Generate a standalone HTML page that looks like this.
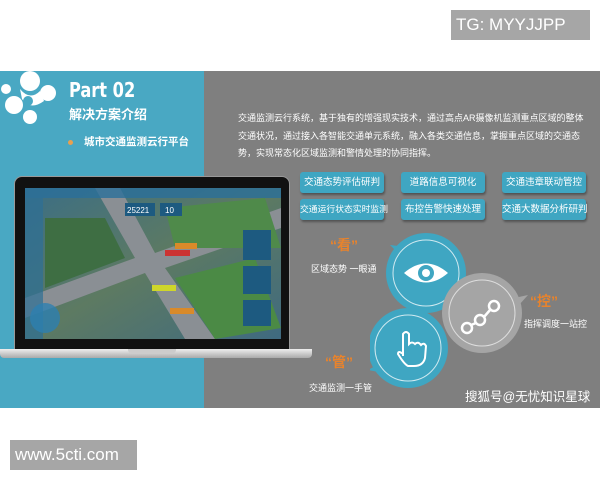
<!DOCTYPE html>
<html><head><meta charset="utf-8"><style>
body{margin:0;width:600px;height:480px;background:#fff;position:relative;overflow:hidden;font-family:"Liberation Sans","Noto Sans CJK SC",sans-serif}
.a{position:absolute}
.btn{position:absolute;width:84px;height:21px;background:#3fa6c2;border-radius:3px;color:#fff;font-size:9.5px;line-height:21px;text-align:center;box-shadow:1px 2px 2px rgba(0,0,0,.35);white-space:nowrap}
.q{position:absolute;color:#e8832c;font-weight:bold;font-size:14px}
.lbl{position:absolute;color:#fff;font-size:9px;white-space:nowrap}
</style></head><body>
<div class="a" style="left:451px;top:10px;width:139px;height:30px;background:#a6a6a6;color:#fff;font-size:17px;line-height:30px;padding-left:5px;box-sizing:border-box">TG: MYYJJPP</div>
<div class="a" style="left:10px;top:440px;width:127px;height:30px;background:#a6a6a6;color:#fff;font-size:17px;line-height:30px;padding-left:5px;box-sizing:border-box">www.5cti.com</div>
<div class="a" style="left:0;top:71px;width:600px;height:337px;background:#7f7f7f"></div>
<div class="a" style="left:0;top:71px;width:204px;height:337px;background:#49a8c3"></div>
<svg class="a" style="left:0;top:71px" width="60" height="60"><g fill="#fff"><circle cx="30" cy="10" r="10"/><circle cx="48" cy="22" r="8"/><circle cx="14" cy="34" r="9"/><circle cx="30" cy="46" r="7"/><circle cx="6" cy="18" r="5"/><path d="M20 18 Q30 30 40 20 L44 30 Q30 40 22 28Z"/></g><circle cx="28" cy="30" r="5" fill="#49a8c3"/></svg>
<div class="a" style="left:69px;top:78px;color:#fff;font-weight:bold;font-size:20px;font-family:'DejaVu Sans Condensed','Liberation Sans Narrow',sans-serif;transform:scaleX(.9);transform-origin:left">Part 02</div>
<div class="a" style="left:69px;top:104px;color:#fff;font-size:13px;font-weight:bold">解决方案介绍</div>
<div class="a" style="left:68px;top:140px;width:5px;height:5px;background:#e8a050;border-radius:50%"></div>
<div class="a" style="left:84px;top:134px;color:#fff;font-size:10.5px;font-weight:bold">城市交通监测云行平台</div>
<div class="a" style="left:238px;top:110px;color:#fff;font-size:9px;line-height:17.5px;width:352px;white-space:nowrap">交通监测云行系统，基于独有的增强现实技术，通过高点AR摄像机监测重点区域的整体<br>交通状况，通过接入各智能交通单元系统，融入各类交通信息，掌握重点区域的交通态<br>势，实现常态化区域监测和警情处理的协同指挥。</div>
<!-- laptop -->
<div class="a" style="left:14px;top:176px;width:276px;height:175px;background:#111;border-radius:8px 8px 0 0;border:1px solid #999;box-sizing:border-box"></div>
<svg class="a" style="left:25px;top:188px" width="256" height="151">
<defs><linearGradient id="g" x1="0" y1="0" x2="1" y2="1"><stop offset="0" stop-color="#3b6e85"/><stop offset=".5" stop-color="#5d7a62"/><stop offset="1" stop-color="#3f6a80"/></linearGradient></defs>
<rect width="256" height="151" fill="url(#g)"/>
<path d="M70 0 L110 70 L0 110 L0 130 L120 85 L160 151 L190 151 L140 80 L256 40 L256 20 L130 65 L95 0Z" fill="#8a8f94"/>
<path d="M140 20 L240 10 L256 60 L150 60Z" fill="#4f8a4a"/>
<path d="M150 90 L230 70 L256 140 L190 151Z" fill="#4b8a45"/>
<path d="M20 30 L80 30 L100 70 L20 100Z" fill="#3e6e43"/>
<rect x="0" y="0" width="256" height="10" fill="#2a6f9a" opacity=".8"/>
<rect x="0" y="10" width="18" height="141" fill="#2d6f96" opacity=".7"/>
<rect x="100" y="15" width="30" height="13" fill="#1d5a80"/><text x="102" y="25" fill="#fff" font-size="8" font-family="Liberation Sans">25221</text>
<rect x="135" y="15" width="22" height="13" fill="#1d5a80"/><text x="140" y="25" fill="#fff" font-size="8" font-family="Liberation Sans">10</text>
<rect x="218" y="42" width="28" height="30" fill="#1d5a80"/><rect x="218" y="78" width="28" height="28" fill="#1d5a80"/><rect x="218" y="112" width="28" height="26" fill="#1d5a80"/>
<rect x="140" y="62" width="25" height="6" fill="#c33"/><rect x="150" y="55" width="22" height="6" fill="#d98a2a"/><rect x="145" y="120" width="24" height="6" fill="#d98a2a"/><rect x="127" y="97" width="24" height="6" fill="#cfd62a"/>
<circle cx="20" cy="130" r="15" fill="#2d7fb0" opacity=".8"/>
</svg>
<div class="a" style="left:0;top:349px;width:312px;height:9px;background:linear-gradient(#eee,#aaa);border-radius:0 0 4px 4px"></div>
<div class="a" style="left:128px;top:349px;width:48px;height:4px;background:#ccc;border-radius:0 0 3px 3px"></div>
<!-- buttons -->
<div class="btn" style="left:300px;top:172px">交通态势评估研判</div>
<div class="btn" style="left:401px;top:172px">道路信息可视化</div>
<div class="btn" style="left:502px;top:172px">交通违章联动管控</div>
<div class="btn" style="left:300px;top:199px;font-size:8.8px">交通运行状态实时监测</div>
<div class="btn" style="left:401px;top:199px">布控告警快速处理</div>
<div class="btn" style="left:502px;top:199px">交通大数据分析研判</div>
<!-- circles -->
<svg class="a" style="left:370px;top:230px" width="170" height="170">
<path d="M20 15 L45 18 L40 35Z" fill="#3fa6c2"/>
<circle cx="56" cy="43" r="40" fill="#3fa6c2"/><circle cx="56" cy="43" r="33" fill="none" stroke="#cfe9f0" stroke-width="1"/>
<path d="M34 43 Q56 24 78 43 Q56 62 34 43Z" fill="#fff"/><circle cx="56" cy="43" r="8" fill="#3fa6c2"/><circle cx="56" cy="43" r="4" fill="#fff"/>
<path d="M158 65 L135 70 L140 85Z" fill="#a5a5a5"/>
<circle cx="112" cy="83" r="40" fill="#a5a5a5"/><circle cx="112" cy="83" r="33" fill="none" stroke="#ddd" stroke-width="1"/>
<g fill="none" stroke="#fff" stroke-width="2.5"><circle cx="97" cy="98" r="5"/><circle cx="110" cy="90" r="5"/><circle cx="124" cy="76" r="5"/><path d="M101 95 L106 93 M114 87 L120 80"/></g>
<path d="M-2 140 L20 128 L25 145Z" fill="#3fa6c2"/>
<circle cx="38" cy="118" r="40" fill="#3fa6c2"/><circle cx="38" cy="118" r="33" fill="none" stroke="#cfe9f0" stroke-width="1"/>
<path d="M33 126 L33 104 Q36 100 39 104 L39 114 Q42 111 45 114 Q48 111 51 115 Q54 112 56 116 L55 128 Q53 136 44 136 L38 136 Q34 134 28 124 Q28 120 33 124" fill="none" stroke="#fff" stroke-width="2"/>
</svg>
<div class="q" style="left:330px;top:235px">“看”</div>
<div class="lbl" style="left:311px;top:262px">区域态势 一眼通</div>
<div class="q" style="left:530px;top:291px">“控”</div>
<div class="lbl" style="left:524px;top:317px">指挥调度一站控</div>
<div class="q" style="left:325px;top:352px">“管”</div>
<div class="lbl" style="left:309px;top:381px">交通监测一手管</div>
<div class="a" style="left:465px;top:386px;color:#fff;font-size:12.5px">搜狐号@无忧知识星球</div>
</body></html>
